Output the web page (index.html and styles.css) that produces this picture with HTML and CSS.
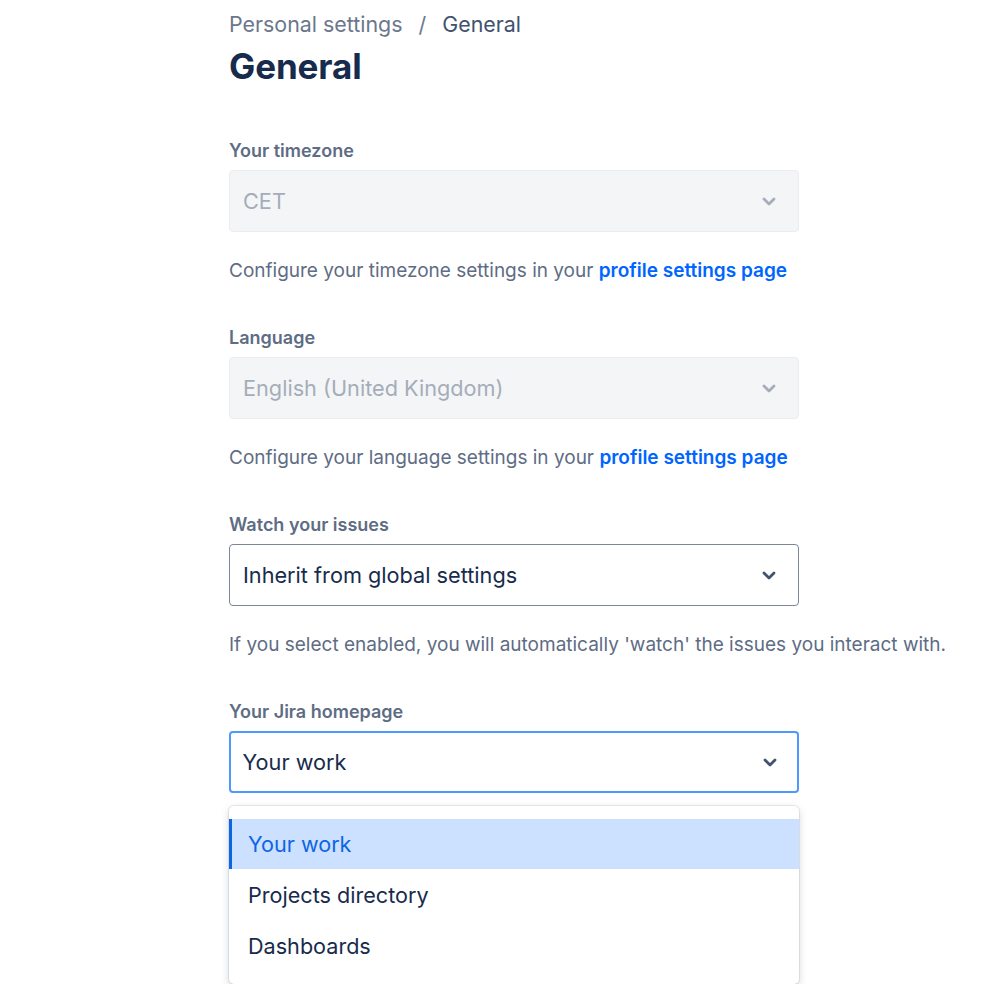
FILE: index.html
```html
<!DOCTYPE html>
<html lang="en">
<head>
<meta charset="utf-8">
<title>General - Personal settings</title>
<link rel="stylesheet" href="styles.css">
</head>
<body>
<main class="page">
  <nav class="breadcrumb">
    <span class="crumb">Personal settings</span>
    <span class="sep">/</span>
    <span class="crumb current">General</span>
  </nav>
  <h1 class="title">General</h1>

  <section class="field">
    <div class="label">Your timezone</div>
    <div class="select disabled">
      <span class="value">CET</span>
      <svg class="chev" viewBox="0 0 14 9" width="14" height="9"><path d="M2 2l5 5 5-5" fill="none" stroke="currentColor" stroke-width="2.8" stroke-linecap="round" stroke-linejoin="round"/></svg>
    </div>
    <p class="help">Configure your timezone settings in your <a class="link">profile settings page</a></p>
  </section>

  <section class="field">
    <div class="label">Language</div>
    <div class="select disabled">
      <span class="value">English (United Kingdom)</span>
      <svg class="chev" viewBox="0 0 14 9" width="14" height="9"><path d="M2 2l5 5 5-5" fill="none" stroke="currentColor" stroke-width="2.8" stroke-linecap="round" stroke-linejoin="round"/></svg>
    </div>
    <p class="help">Configure your language settings in your <a class="link">profile settings page</a></p>
  </section>

  <section class="field">
    <div class="label">Watch your issues</div>
    <div class="select">
      <span class="value">Inherit from global settings</span>
      <svg class="chev" viewBox="0 0 14 9" width="14" height="9"><path d="M2 2l5 5 5-5" fill="none" stroke="currentColor" stroke-width="2.8" stroke-linecap="round" stroke-linejoin="round"/></svg>
    </div>
    <p class="help">If you select enabled, you will automatically 'watch' the issues you interact with.</p>
  </section>

  <section class="field last">
    <div class="label">Your Jira homepage</div>
    <div class="select focused">
      <span class="value">Your work</span>
      <svg class="chev" viewBox="0 0 14 9" width="14" height="9"><path d="M2 2l5 5 5-5" fill="none" stroke="currentColor" stroke-width="2.8" stroke-linecap="round" stroke-linejoin="round"/></svg>
    </div>
    <ul class="menu">
      <li class="option selected">Your work</li>
      <li class="option">Projects directory</li>
      <li class="option">Dashboards</li>
    </ul>
  </section>
</main>
</body>
</html>
```

FILE: styles.css
```css
html, body {
  margin: 0;
  padding: 0;
  background: #ffffff;
}

body {
  font-family: Inter, "Liberation Sans", Arial, sans-serif;
  color: #172B4D;
}

.page {
  padding: 9px 0 0 229px;
  width: 740px;
}

.breadcrumb {
  display: flex;
  align-items: center;
  gap: 15px;
  height: 30px;
  font-size: 21.4px;
  line-height: 30px;
  color: #6B778C;
}

.breadcrumb .current {
  color: #42526E;
}

.breadcrumb .sep {
  color: #6B778C;
  padding: 0 1px;
}

.title {
  margin: 3px 0 0 0;
  font-size: 35px;
  line-height: 48px;
  font-weight: 700;
  color: #172B4D;
  letter-spacing: -0.1px;
}

.field {
  margin-top: 49px;
}

.field + .field {
  margin-top: 43px;
}

.label {
  font-size: 18px;
  line-height: 24px;
  font-weight: 600;
  color: #5E6C84;
}

.select {
  box-sizing: border-box;
  width: 570px;
  height: 62px;
  margin-top: 7px;
  display: flex;
  align-items: center;
  justify-content: space-between;
  padding: 0 22px 0 13px;
  border: 1px solid #7A869A;
  border-radius: 4px;
  background: #ffffff;
  font-size: 21.7px;
  color: #172B4D;
}

.select .chev {
  color: #42526E;
}

.select.disabled {
  background: #F4F5F7;
  border-color: #EBECF0;
  color: #A5ADBA;
}

.select.disabled .chev {
  color: #A5ADBA;
}

.select.focused {
  border: 2.5px solid #4C9AFF;
  padding-left: 11.5px;
  padding-right: 20.5px;
}

.help {
  margin: 27px 0 0 0;
  font-size: 19px;
  line-height: 24px;
  color: #5E6C84;
}

.link {
  color: #0065FF;
  font-weight: 600;
  cursor: pointer;
}

.menu {
  list-style: none;
  box-sizing: border-box;
  width: 570px;
  margin: 13px 0 0 0;
  padding: 13px 0;
  background: #ffffff;
  border-radius: 5px;
  box-shadow: 0 0 0 1px rgba(9, 30, 66, 0.08), 0 3px 8px rgba(9, 30, 66, 0.18);
}

.option {
  height: 51px;
  display: flex;
  align-items: center;
  padding-left: 16px;
  font-size: 21.6px;
  color: #172B4D;
  border-left: 3px solid transparent;
  box-sizing: border-box;
}

.option.selected {
  height: 50px;
  background: #CCE0FF;
  color: #0C66E4;
  border-left-color: #0C66E4;
}
```
